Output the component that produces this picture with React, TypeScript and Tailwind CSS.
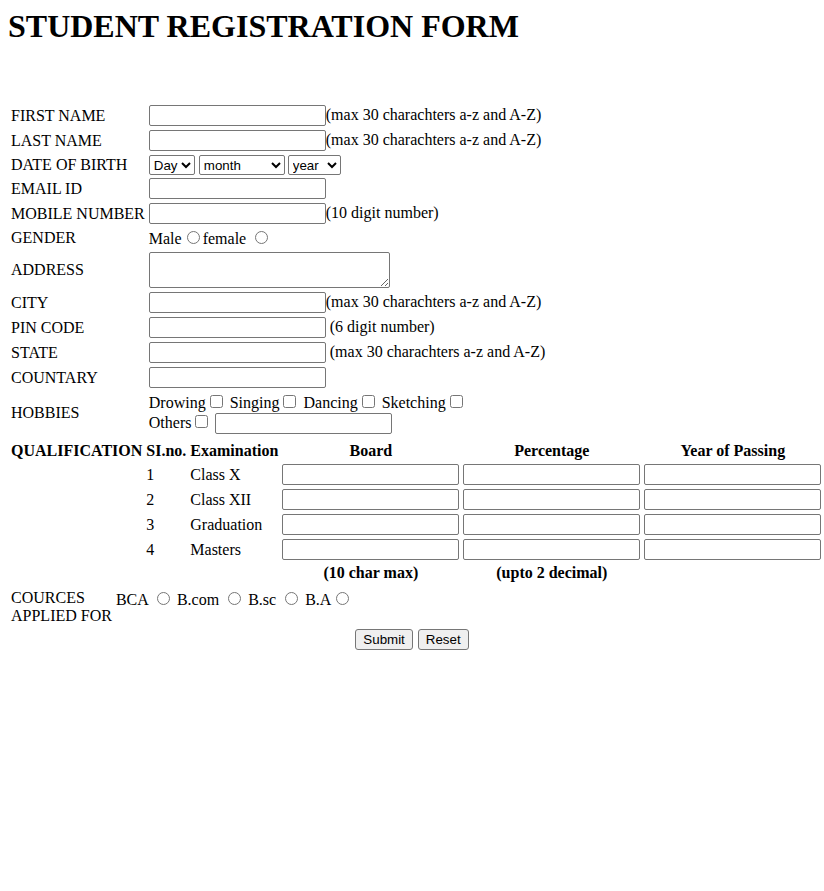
const inputCls =
  "w-[177px] h-[21px] border border-[#767676] rounded-[2px] bg-white px-[2px] py-px font-['Liberation_Sans',Arial,sans-serif] text-[13.33px]";
const selectCls =
  "h-[20px] shrink-0 border border-[#767676] rounded-[2px] bg-white pl-0 font-['Liberation_Sans',Arial,sans-serif] text-[13.33px] text-black";
const radioCls = "ml-[5px] mr-[3px] mt-[3px] mb-0";
const checkCls = "ml-[4px] mr-[3px] my-[3px]";
const btnCls =
  "h-[21px] border border-[#767676] rounded-[3px] bg-[#efefef] px-[7px] font-['Liberation_Sans',Arial,sans-serif] text-[13.33px] text-black";

const exams = ['Class X', 'Class XII', 'Graduation', 'Masters'];

function TextRow({ label, hint }: { label: string; hint?: string }) {
  return (
    <tr>
      <td className="p-px">{label}</td>
      <td className="p-px">
        <input type="text" className={inputCls} />
        {hint}
      </td>
    </tr>
  );
}

export default function App() {
  return (
    <div className="min-h-[891px] bg-white p-[8px] font-['Liberation_Serif','Times_New_Roman',serif] text-[16px] leading-[normal] text-black">
      <h1 className="text-[32px] font-bold leading-[normal]">STUDENT REGISTRATION FORM</h1>

      <form>
        <table className="mt-[57px] border-separate border-spacing-[2px]">
          <tbody>
            <TextRow label="FIRST NAME" hint="(max 30 charachters a-z and A-Z)" />
            <TextRow label="LAST NAME" hint="(max 30 charachters a-z and A-Z)" />
            <tr>
              <td className="p-px">DATE OF BIRTH</td>
              <td className="p-px">
                <div className="flex h-[19px] items-start">
                  <select className={`${selectCls} w-[46px]`} defaultValue="Day">
                    <option>Day</option>
                  </select>
                  <select className={`${selectCls} ml-[4px] w-[86px]`} defaultValue="month">
                    <option>month</option>
                  </select>
                  <select className={`${selectCls} ml-[3px] w-[53px]`} defaultValue="year">
                    <option>year</option>
                  </select>
                </div>
              </td>
            </tr>
            <TextRow label="EMAIL ID" />
            <TextRow label="MOBILE NUMBER" hint="(10 digit number)" />
            <tr>
              <td className="p-px">GENDER</td>
              <td className="p-px">
                Male<input type="radio" name="gender" className={radioCls} />female{' '}
                <input type="radio" name="gender" className={radioCls} />
              </td>
            </tr>
            <tr>
              <td className="p-px">ADDRESS</td>
              <td className="p-px">
                <textarea className="block h-[36px] w-[241px] resize border border-[#767676] rounded-[2px] bg-white px-[2px] py-px font-['Liberation_Mono',monospace] text-[13.33px]" />
              </td>
            </tr>
            <TextRow label="CITY" hint="(max 30 charachters a-z and A-Z)" />
            <TextRow label="PIN CODE" hint=" (6 digit number)" />
            <TextRow label="STATE" hint=" (max 30 charachters a-z and A-Z)" />
            <TextRow label="COUNTARY" />
            <tr>
              <td className="p-px">HOBBIES</td>
              <td className="p-px">
                Drowing<input type="checkbox" className={checkCls} /> Singing
                <input type="checkbox" className={checkCls} /> Dancing
                <input type="checkbox" className={checkCls} /> Sketching
                <input type="checkbox" className={checkCls} />
                <br />
                Others<input type="checkbox" className={checkCls} />{' '}
                <input type="text" className={inputCls} />
              </td>
            </tr>
          </tbody>
        </table>

        {/* Qualification */}
        <table className="mt-[2px] border-separate border-spacing-[2px]">
          <tbody>
            <tr>
              <th className="p-px font-bold">QUALIFICATION</th>
              <th className="p-px font-bold">SI.no.</th>
              <th className="p-px font-bold">Examination</th>
              <th className="p-px font-bold">Board</th>
              <th className="p-px font-bold">Percentage</th>
              <th className="p-px font-bold">Year of Passing</th>
            </tr>
            {exams.map((exam, i) => (
              <tr key={exam}>
                <td className="p-px"></td>
                <td className="p-px text-left">{i + 1}</td>
                <td className="p-px text-left">{exam}</td>
                <td className="p-px">
                  <input type="text" className={inputCls} />
                </td>
                <td className="p-px">
                  <input type="text" className={inputCls} />
                </td>
                <td className="p-px">
                  <input type="text" className={inputCls} />
                </td>
              </tr>
            ))}
            <tr>
              <td className="p-px"></td>
              <td className="p-px"></td>
              <td className="p-px"></td>
              <th className="p-px font-bold">(10 char max)</th>
              <th className="p-px font-bold">(upto 2 decimal)</th>
              <td className="p-px"></td>
            </tr>
          </tbody>
        </table>

        <table className="mt-[1px] border-separate border-spacing-[2px]">
          <tbody>
            <tr>
              <td className="p-px align-top">
                COURCES
                <br />
                APPLIED FOR
              </td>
              <td className="p-px align-top">
                BCA <input type="radio" name="course" className={radioCls} /> B.com{' '}
                <input type="radio" name="course" className={radioCls} /> B.sc{' '}
                <input type="radio" name="course" className={radioCls} /> B.A
                <input type="radio" name="course" className={radioCls} />
              </td>
            </tr>
          </tbody>
        </table>

        <div className="mt-[1px] flex justify-center gap-[5px]">
          <button type="submit" className={btnCls}>
            Submit
          </button>
          <button type="reset" className={btnCls}>
            Reset
          </button>
        </div>
      </form>
    </div>
  );
}
